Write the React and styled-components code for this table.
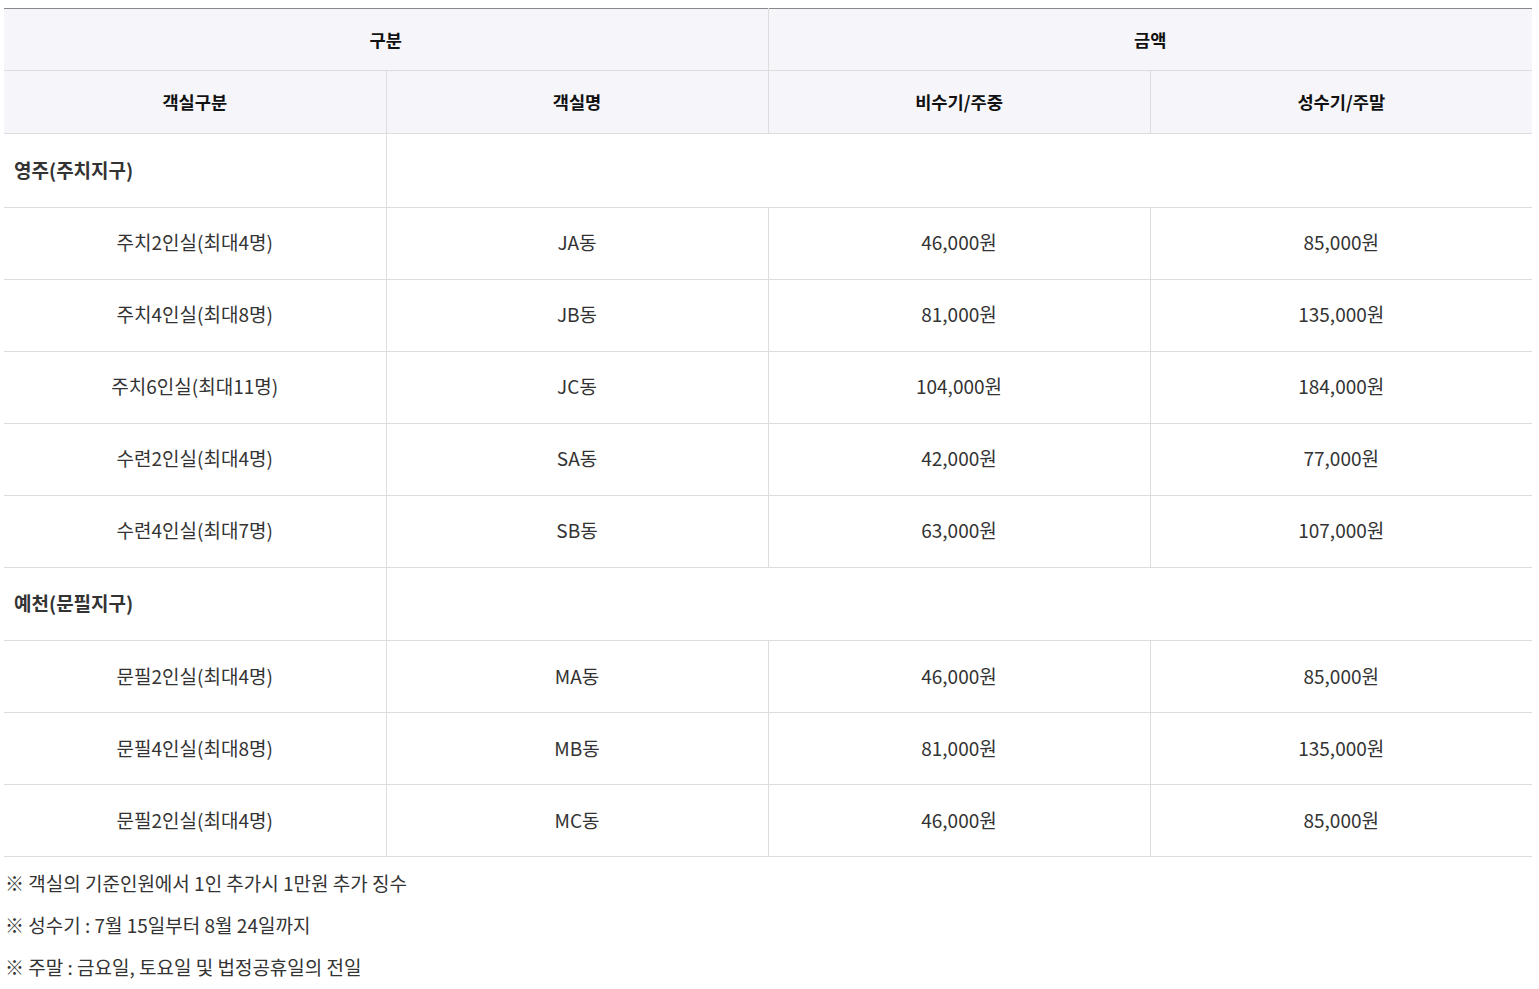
import React from 'react';
import styled, { createGlobalStyle } from 'styled-components';

const GlobalStyle = createGlobalStyle`
  body {
    margin: 0;
    background: #ffffff;
    font-family: 'Noto Sans CJK KR', 'Noto Sans', sans-serif;
    color: #333333;
  }
`;

const Wrap = styled.div`
  padding: 8px 7px 0 4px;
`;

const Table = styled.table`
  width: 100%;
  border-collapse: collapse;
  table-layout: fixed;
  border-top: 1px solid #888888;
`;

const Th = styled.th`
  height: ${(p) => (p.sub ? '62px' : '61px')};
  padding: 0;
  background: #f6f6fa;
  border-bottom: 1px solid #dddddd;
  border-left: ${(p) => (p.first ? 'none' : '1px solid #dddddd')};
  font-size: 17.6px;
  font-weight: 700;
  color: #111111;
  text-align: center;
  vertical-align: middle;
  line-height: 1;
`;

const Td = styled.td`
  height: ${(p) => (p.region ? '70.5px' : '68px')};
  padding: ${(p) => (p.region ? '0 0 2px 10px' : '0 0 3px 0')};
  border-bottom: 1px solid #dddddd;
  border-left: ${(p) => (p.first ? 'none' : '1px solid #dddddd')};
  font-size: 19px;
  font-weight: ${(p) => (p.region ? 700 : 400)};
  color: #333333;
  text-align: ${(p) => (p.region ? 'left' : 'center')};
  vertical-align: middle;
  line-height: 1;
`;

const Notes = styled.div`
  margin-top: 5px;
  padding-left: 1px;
`;

const Note = styled.p`
  margin: 0;
  font-size: 19px;
  line-height: 42px;
  color: #333333;
`;

const groups = [
  {
    name: '영주(주치지구)',
    rooms: [
      ['주치2인실(최대4명)', 'JA동', '46,000원', '85,000원'],
      ['주치4인실(최대8명)', 'JB동', '81,000원', '135,000원'],
      ['주치6인실(최대11명)', 'JC동', '104,000원', '184,000원'],
      ['수련2인실(최대4명)', 'SA동', '42,000원', '77,000원'],
      ['수련4인실(최대7명)', 'SB동', '63,000원', '107,000원'],
    ],
  },
  {
    name: '예천(문필지구)',
    rooms: [
      ['문필2인실(최대4명)', 'MA동', '46,000원', '85,000원'],
      ['문필4인실(최대8명)', 'MB동', '81,000원', '135,000원'],
      ['문필2인실(최대4명)', 'MC동', '46,000원', '85,000원'],
    ],
  },
];

const notes = [
  '※ 객실의 기준인원에서 1인 추가시 1만원 추가 징수',
  '※ 성수기 : 7월 15일부터 8월 24일까지',
  '※ 주말 : 금요일, 토요일 및 법정공휴일의 전일',
];

const App = () => (
  <Wrap>
    <GlobalStyle />
    <Table>
      <thead>
        <tr>
          <Th first colSpan={2}>구분</Th>
          <Th colSpan={2}>금액</Th>
        </tr>
        <tr>
          <Th sub first>객실구분</Th>
          <Th sub>객실명</Th>
          <Th sub>비수기/주중</Th>
          <Th sub>성수기/주말</Th>
        </tr>
      </thead>
      <tbody>
        {groups.map((g) => (
          <React.Fragment key={g.name}>
            <tr>
              <Td first region>{g.name}</Td>
              <Td colSpan={3} />
            </tr>
            {g.rooms.map((r) => (
              <tr key={r[1]}>
                {r.map((c, i) => (
                  <Td key={i} first={i === 0}>{c}</Td>
                ))}
              </tr>
            ))}
          </React.Fragment>
        ))}
      </tbody>
    </Table>
    <Notes>
      {notes.map((n) => (
        <Note key={n}>{n}</Note>
      ))}
    </Notes>
  </Wrap>
);

export default App;
